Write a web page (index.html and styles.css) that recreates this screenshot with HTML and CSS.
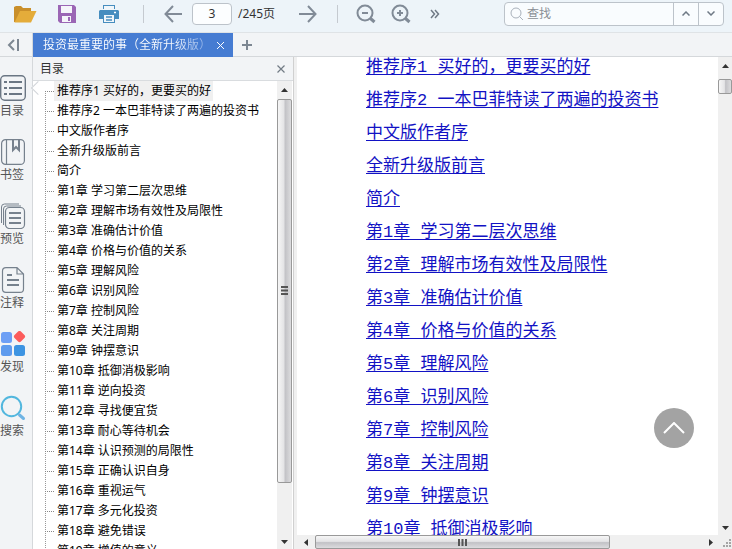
FILE: index.html
```html
<!DOCTYPE html>
<html lang="zh-CN">
<head>
<meta charset="utf-8">
<meta name="viewport" content="width=device-width, initial-scale=1">
<title>投资最重要的事（全新升级版）</title>
<link rel="stylesheet" href="styles.css">
</head>
<body>
<header class="toolbar">
  <div class="file-tools">
    <button class="tool" aria-label="打开"><svg width="24" height="20" viewBox="0 0 24 20"><path d="M1 18V3l2-1h5l2 2h8v4H8L3 18z" fill="#c98f2b"/><path d="M7 7h16.500L18 18.500H1.500z" fill="#e4ac3a"/></svg></button>
    <button class="tool" aria-label="保存"><svg width="20" height="20" viewBox="0 0 20 20"><path d="M3 1h14l2 2v16H3l-2-2V1z" fill="#9b66b5"/><path d="M4 2h11v7H4zM5 12h9v6H5z" fill="#f5f5fa"/><path d="M11 13h2v4h-2z" fill="#9b66b5"/></svg></button>
    <button class="tool" aria-label="打印"><svg width="20" height="20" viewBox="0 0 20 20"><path d="M4 1h12v4H4zM1 6h18l1 1v8H0V7zM4 12h12v7H4z" fill="#468dbf"/><path d="M5 2h10v4H5zM5 11h10v7H5z" fill="#f0f6fa"/><path d="M7 13h6M7 16h6" stroke="#468dbf" stroke-width="1.500"/><path d="M15 8.500h2" stroke="#fff" stroke-width="1.500"/></svg></button>
  </div>
  <span class="divider"></span>
  <div class="page-tools">
    <button class="tool" aria-label="上一页"><svg width="18" height="18" viewBox="0 0 18 18" fill="none" stroke="#818b97" stroke-width="2"><path d="M18 9H2M9 1L1.500 9 9 17"/></svg></button>
    <input class="page-number" type="text" value="3" aria-label="页码">
    <span class="page-total">/245页</span>
    <button class="tool" aria-label="下一页"><svg width="18" height="18" viewBox="0 0 18 18" fill="none" stroke="#818b97" stroke-width="2"><path d="M0 9h16M9 1l7.500 8L9 17"/></svg></button>
  </div>
  <span class="divider"></span>
  <div class="zoom-tools">
    <button class="tool" aria-label="缩小"><svg width="20" height="20" viewBox="0 0 20 20" fill="none" stroke="#818b97" stroke-width="2"><circle cx="9" cy="9" r="7.500"/><path d="M6 9h6"/><path d="M14.500 14.500l4 3.500" stroke-width="3"/></svg></button>
    <button class="tool" aria-label="放大"><svg width="20" height="20" viewBox="0 0 20 20" fill="none" stroke="#818b97" stroke-width="2"><circle cx="9" cy="9" r="7.500"/><path d="M6 9h6M9 6v6"/><path d="M14.500 14.500l4 3.500" stroke-width="3"/></svg></button>
    <button class="tool more" aria-label="更多"><svg width="10" height="10" viewBox="0 0 10 10" fill="none" stroke="#6f7985" stroke-width="1.500"><path d="M1 1l3.500 4L1 9M5 1l3.500 4L5 9"/></svg></button>
  </div>
  <div class="search">
    <svg width="14" height="14" viewBox="0 0 14 14" fill="none" stroke="#a9b1bb" stroke-width="1"><circle cx="6" cy="6" r="5"/><path d="M9.500 9.500L13 13"/></svg>
    <input type="text" placeholder="查找" aria-label="查找">
    <button aria-label="查找上一个"><svg width="8" height="5" viewBox="0 0 8 5" fill="none" stroke="#6f7985" stroke-width="1.500"><path d="M.5 4.500L4 1l3.500 3.500"/></svg></button>
    <button aria-label="查找下一个"><svg width="8" height="5" viewBox="0 0 8 5" fill="none" stroke="#6f7985" stroke-width="1.500"><path d="M.5.5L4 4 7.500.5"/></svg></button>
  </div>
</header>

<nav class="tabs">
  <button class="collapse" aria-label="收起侧栏"><svg width="12" height="12" viewBox="0 0 12 12" fill="none" stroke="#7d8792" stroke-width="2"><path d="M7 1L2 6l5 5M11 0v12"/></svg></button>
  <div class="tab">
    <span class="tab-title">投资最重要的事（全新升级版）</span>
    <button class="tab-close" aria-label="关闭标签"><svg width="7" height="7" viewBox="0 0 7 7" stroke="#fff" stroke-width="1"><path d="M0 0l7 7M7 0L0 7"/></svg></button>
  </div>
  <button class="add" aria-label="新建标签"><svg width="10" height="10" viewBox="0 0 10 10" stroke="#7d8792" stroke-width="2"><path d="M0 5h10M5 0v10"/></svg></button>
</nav>

<main class="workspace">
  <aside class="rail">
    <button class="rail-item active"><svg width="26" height="26" viewBox="0 0 26 26" fill="none" stroke="#6a7683"><rect x=".7" y=".7" width="24.600" height="24.600" rx="4" stroke-width="1.400"/><path d="M4 7h3M4 13h3M4 19h3M9 7h13M9 13h13M9 19h13" stroke-width="2"/></svg><span>目录</span></button>
    <button class="rail-item"><svg width="26" height="26" viewBox="0 0 26 26" fill="none" stroke="#76818d" stroke-width="1.200"><rect x="1.600" y=".6" width="22.800" height="24.800" rx="4"/><path d="M6.500 1v24"/><path d="M13 1v10l3-3 3 3V1" stroke-width="2"/></svg><span>书签</span></button>
    <button class="rail-item"><svg width="26" height="26" viewBox="0 0 26 26" fill="none" stroke="#76818d" stroke-width="1"><path d="M1.500 20V4q0-3 3-3H19M3.500 22V6q0-3 3-3H21"/><rect x="5.500" y="4.500" width="19" height="21" rx="4" stroke-width="1.200"/><path d="M9 10h12M9 15h12M9 20h12" stroke-width="2"/></svg><span>预览</span></button>
    <button class="rail-item"><svg width="26" height="26" viewBox="0 0 26 26" fill="none" stroke="#76818d" stroke-width="1.200"><path d="M17 .6H6q-3.500 0-3.500 3.500v18q0 3.300 3.500 3.300h14q3.500 0 3.500-3.500V7zM17 .6V7h6.500"/><path d="M7 8h5M7 13h12M7 18h12" stroke-width="2"/></svg><span>注释</span></button>
    <button class="rail-item"><svg width="26" height="26" viewBox="0 0 26 26"><rect x="1" y="1" width="11" height="11" rx="2.500" fill="#6d9ff5"/><rect x="1" y="14" width="11" height="11" rx="2.500" fill="#5e9bee"/><rect x="14" y="14" width="11" height="11" rx="2.500" fill="#3d94e2"/><rect x="15" y="1" width="9" height="9" rx="2" transform="rotate(45 19.500 5.500)" fill="#fc5c5c"/></svg><span>发现</span></button>
    <button class="rail-item"><svg width="26" height="26" viewBox="0 0 26 26" fill="none"><circle cx="11.500" cy="11.500" r="9.700" stroke="#52b7de" stroke-width="2"/><path d="M19.500 20l4 3.500" stroke="#6fb4e4" stroke-width="3" stroke-linecap="round"/></svg><span>搜索</span></button>
  </aside>

  <section class="outline">
    <header class="outline-head"><h2>目录</h2><button aria-label="关闭目录"><svg width="8" height="8" viewBox="0 0 8 8" stroke="#727b85" stroke-width="1.200"><path d="M.5.5l7 7M7.500.5l-7 7"/></svg></button></header>
    <div class="outline-body">
      <ul class="tree">
        <li><a class="current" href="#">推荐序1 买好的，更要买的好</a></li>
        <li><a href="#">推荐序2 一本巴菲特读了两遍的投资书</a></li>
        <li><a href="#">中文版作者序</a></li>
        <li><a href="#">全新升级版前言</a></li>
        <li><a href="#">简介</a></li>
        <li><a href="#">第1章 学习第二层次思维</a></li>
        <li><a href="#">第2章 理解市场有效性及局限性</a></li>
        <li><a href="#">第3章 准确估计价值</a></li>
        <li><a href="#">第4章 价格与价值的关系</a></li>
        <li><a href="#">第5章 理解风险</a></li>
        <li><a href="#">第6章 识别风险</a></li>
        <li><a href="#">第7章 控制风险</a></li>
        <li><a href="#">第8章 关注周期</a></li>
        <li><a href="#">第9章 钟摆意识</a></li>
        <li><a href="#">第10章 抵御消极影响</a></li>
        <li><a href="#">第11章 逆向投资</a></li>
        <li><a href="#">第12章 寻找便宜货</a></li>
        <li><a href="#">第13章 耐心等待机会</a></li>
        <li><a href="#">第14章 认识预测的局限性</a></li>
        <li><a href="#">第15章 正确认识自身</a></li>
        <li><a href="#">第16章 重视运气</a></li>
        <li><a href="#">第17章 多元化投资</a></li>
        <li><a href="#">第18章 避免错误</a></li>
        <li><a href="#">第19章 增值的意义</a></li>
      </ul>
      <div class="vbar">
        <span class="arrow"><svg width="7" height="4" viewBox="0 0 7 4"><path d="M3.500 0L7 4H0z" fill="#333"/></svg></span>
        <div class="vtrack"><div class="vthumb tall"><svg width="8" height="9" viewBox="0 0 8 9" stroke="#555" stroke-width="2"><path d="M0 1h7M0 4.500h7M0 8h7"/></svg></div></div>
        <span class="arrow"><svg width="7" height="4" viewBox="0 0 7 4"><path d="M0 0h7L3.500 4z" fill="#333"/></svg></span>
      </div>
    </div>
  </section>

  <section class="viewer">
    <div class="page">
      <ul class="contents">
        <li><a href="#">推荐序1 买好的，更要买的好</a></li>
        <li><a href="#">推荐序2 一本巴菲特读了两遍的投资书</a></li>
        <li><a href="#">中文版作者序</a></li>
        <li><a href="#">全新升级版前言</a></li>
        <li><a href="#">简介</a></li>
        <li><a href="#">第1章 学习第二层次思维</a></li>
        <li><a href="#">第2章 理解市场有效性及局限性</a></li>
        <li><a href="#">第3章 准确估计价值</a></li>
        <li><a href="#">第4章 价格与价值的关系</a></li>
        <li><a href="#">第5章 理解风险</a></li>
        <li><a href="#">第6章 识别风险</a></li>
        <li><a href="#">第7章 控制风险</a></li>
        <li><a href="#">第8章 关注周期</a></li>
        <li><a href="#">第9章 钟摆意识</a></li>
        <li><a href="#">第10章 抵御消极影响</a></li>
      </ul>
      <button class="to-top" aria-label="回到顶部"><svg width="22" height="12" viewBox="0 0 22 12" fill="none" stroke="#fff" stroke-width="2"><path d="M1 11L11 1l10 10"/></svg></button>
    </div>
    <div class="vbar">
      <span class="arrow"><svg width="7" height="4" viewBox="0 0 7 4"><path d="M3.500 0L7 4H0z" fill="#333"/></svg></span>
      <div class="vtrack page-track"><div class="vthumb short"></div></div>
      <span class="arrow"><svg width="7" height="4" viewBox="0 0 7 4"><path d="M0 0h7L3.500 4z" fill="#333"/></svg></span>
    </div>
    <div class="hbar">
      <span class="arrow"><svg width="4" height="7" viewBox="0 0 4 7"><path d="M4 0v7L0 3.500z" fill="#333"/></svg></span>
      <div class="htrack"><div class="hthumb"><svg width="9" height="7" viewBox="0 0 9 7" stroke="#555" stroke-width="2"><path d="M1 0v7M4.500 0v7M8 0v7"/></svg></div></div>
      <span class="arrow"><svg width="4" height="7" viewBox="0 0 4 7"><path d="M0 0v7l4-3.500z" fill="#333"/></svg></span>
    </div>
    <div class="corner"><svg width="10" height="10" viewBox="0 0 10 10" fill="#a5a5a5"><path d="M7 0h2v2H7zM4 3h2v2H4zM7 3h2v2H7zM1 6h2v2H1zM4 6h2v2H4zM7 6h2v2H7z"/></svg></div>
  </section>
</main>
</body>
</html>
```
FILE: styles.css
```css
* { box-sizing: border-box; }

body {
  margin: 0;
  height: 100vh;
  display: flex;
  flex-direction: column;
  overflow: hidden;
  background: #f2f4f6;
  color: #000;
  font: 12px/20px "Noto Sans", "Noto Sans CJK SC", sans-serif;
}

button {
  display: flex;
  align-items: center;
  justify-content: center;
  padding: 0;
  border: 0;
  background: none;
  color: inherit;
  font: inherit;
}

input { font: inherit; }
svg { display: block; flex: none; }
ul { list-style: none; margin: 0; padding: 0; }

/* Toolbar */
.toolbar {
  display: flex;
  align-items: center;
  flex: none;
  height: 33px;
  padding: 0 8px 5px 13px;
  background: #edf4f9;
  border-bottom: 1px solid #dfe3e6;
}

.file-tools { display: flex; align-items: center; gap: 20px; }
.file-tools .tool + .tool + .tool { margin-left: 2px; }
.divider { width: 1px; height: 18px; margin: 0 18px 0 20px; background: #c5cad0; }
.file-tools + .divider { margin: 0 20px 0 24px; }
.page-tools { display: flex; align-items: center; }

.page-number {
  width: 40px;
  height: 22px;
  margin: 0 6px 0 10px;
  padding: 0;
  text-align: center;
  color: #333;
  background: #fcfeff;
  border: 1px solid #bcc3ca;
  border-radius: 4px;
}

.page-total { width: 61px; color: #333; }
.zoom-tools { display: flex; align-items: center; gap: 15px; }
.zoom-tools .more { margin-left: 4px; }

.search {
  display: flex;
  align-items: center;
  flex: none;
  width: 220px;
  height: 24px;
  margin-left: auto;
  padding-left: 5px;
  background: #f9fcfe;
  border: 1px solid #bcc3ca;
  border-radius: 4px;
}

.search input {
  flex: 1;
  min-width: 0;
  padding: 0 3px;
  border: 0;
  background: none;
}

.search input::placeholder { color: #8a8f95; opacity: 1; }
.search button { width: 25px; height: 22px; border-left: 1px solid #bcc3ca; }

/* Tabs */
.tabs {
  display: flex;
  flex: none;
  height: 24px;
  border-bottom: 1px solid #d5d8db;
}

.collapse { width: 33px; padding-right: 7px; border-right: 1px solid #d5d8db; }

.tab {
  display: flex;
  align-items: center;
  width: 200px;
  height: 24px;
  padding-left: 10px;
  background: #467cd2;
  color: #fff;
}

.tab-title {
  flex: 1;
  white-space: nowrap;
  background: linear-gradient(to right, #fff 75%, #83a8e4 98%);
  background-clip: text;
  color: transparent;
}

.tab-close { width: 22px; height: 10px; padding-right: 3px; }
.add { width: 28px; }

/* Work area */
.workspace { display: flex; flex: 1; min-height: 0; }

.rail {
  display: flex;
  flex-direction: column;
  flex: none;
  gap: 18px;
  width: 33px;
  padding-top: 18px;
  border-right: 1px solid #d5d8db;
}

.rail-item {
  position: relative;
  flex-direction: column;
  align-items: flex-start;
  flex: none;
  line-height: 20px;
  color: #555;
}

.rail-item.active::after {
  content: "";
  position: absolute;
  right: -11px;
  top: 8px;
  width: 9px;
  height: 9px;
  border: 1px solid #d0d4d8;
  border-width: 0 0 1px 1px;
  background: #fff;
  transform: rotate(45deg);
}

.outline {
  display: flex;
  flex-direction: column;
  flex: none;
  width: 261px;
  background: #fff;
  border-right: 1px solid #d0d0d0;
}

.outline-head {
  display: flex;
  align-items: center;
  justify-content: space-between;
  flex: none;
  height: 24px;
  padding: 0 8px 0 7px;
  background: #f2f4f6;
  border-bottom: 1px solid #d9dcdf;
}

.outline-head h2 { margin: 0; font-size: 12px; font-weight: 400; color: #333; }
.outline-body { display: flex; flex: 1; min-height: 0; padding-right: 1px; }

.tree { flex: 1; min-width: 0; padding-left: 12px; overflow: hidden; }

.tree li {
  display: flex;
  align-items: center;
  height: 20px;
  background: repeating-linear-gradient(to bottom, #999 0 1px, transparent 1px 2px) 0 0 / 1px 100% no-repeat;
}

.tree li:first-child { background-position: 0 10px; }
.tree li::before { content: ""; width: 9px; border-top: 1px dotted #888; }

.tree a {
  padding: 0 2px 0 3px;
  color: #000;
  line-height: 20px;
  white-space: nowrap;
  text-decoration: none;
}

.tree .current { background: #f0f0f0; }

/* Scroll bars */
.vbar { display: flex; flex-direction: column; flex: none; width: 15px; background: #f0f0f0; }
.arrow { display: flex; align-items: center; justify-content: center; flex: none; width: 15px; height: 15px; }
.vbar > .arrow { height: 18px; }
.vbar > .arrow:last-child { height: 14px; }
.vtrack { flex: 1; min-height: 0; }

.vthumb {
  display: flex;
  align-items: center;
  justify-content: center;
  background: linear-gradient(to right, #f6f6f6, #e4e4e6 45%, #c2c2c6 55%, #dcdcde);
  border: 1px solid #999;
  border-radius: 2px;
}

.tall { height: 88%; }
.short { height: 15px; }
.page-track { padding-top: 4px; }

/* Document */
.viewer {
  display: grid;
  grid-template: minmax(0, 1fr) 14px / minmax(0, 1fr) 14px;
  flex: 1;
  min-width: 0;
  border-left: 3px solid #f0f0f0;
}

.viewer .vbar { width: auto; }
.page { position: relative; overflow: hidden; background: #fff; padding: 2px 0 0 69px; }
.contents { display: flex; flex-direction: column; gap: 15px; }

.contents li {
  font: 17px/18px "Liberation Mono", "Noto Sans CJK SC", monospace;
  white-space: nowrap;
}

.contents a { color: #1212c4; text-decoration: underline 1px; text-underline-offset: 2px; }

.to-top {
  position: absolute;
  right: 24px;
  bottom: 87px;
  width: 40px;
  height: 40px;
  border-radius: 50%;
  background: #a3a3a3;
}

.hbar { display: flex; align-items: center; background: #f0f0f0; }
.hbar > .arrow:first-child { width: 18px; }
.htrack { flex: 1; }

.hthumb {
  display: flex;
  align-items: center;
  justify-content: center;
  width: 76%;
  height: 14px;
  background: linear-gradient(#f6f6f6, #e4e4e6 45%, #c2c2c6 55%, #dcdcde);
  border: 1px solid #999;
  border-radius: 2px;
}

.corner { display: flex; align-items: flex-end; justify-content: flex-end; background: #f0f0f0; }
```
